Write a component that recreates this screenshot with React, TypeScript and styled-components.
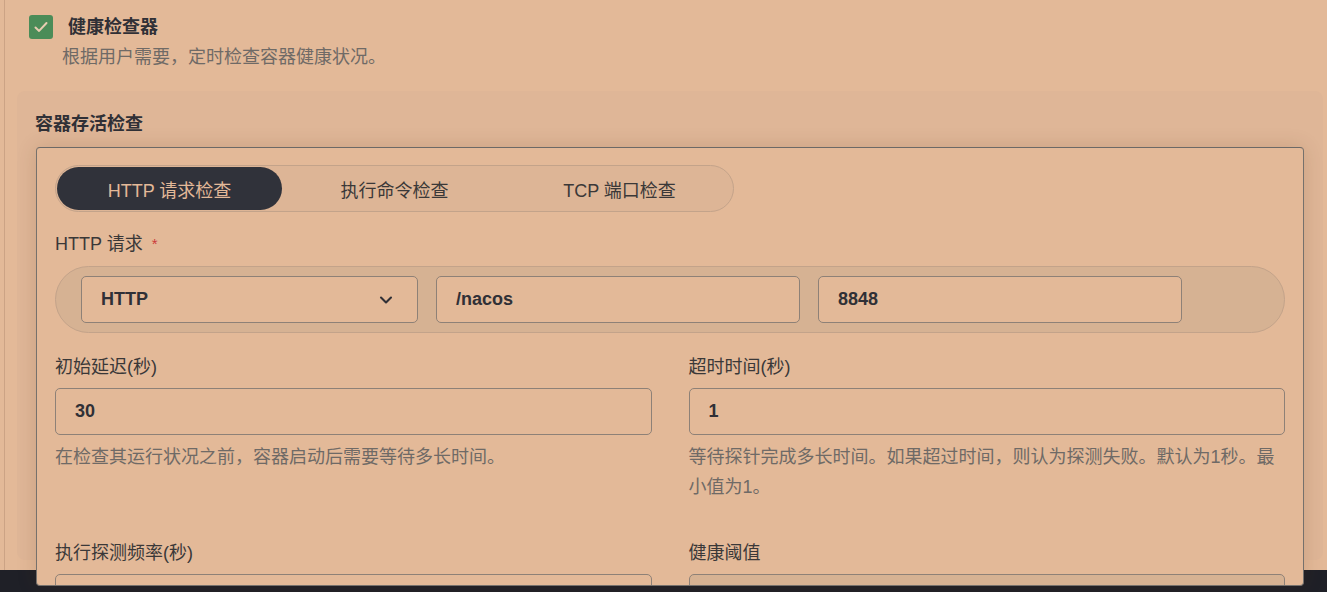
import styled, { createGlobalStyle } from 'styled-components'
import { ChevronDown } from 'lucide-react'

const colors = {
  page: '#e3b998',
  panel: '#dfb697',
  well: '#d6b293',
  segment: '#ddb596',
  dark: '#30323a',
  footer: '#1f2027',
  text: '#303036',
  muted: '#6f6a66',
  inputBorder: '#8e8177',
  softBorder: '#c3a38a',
  green: '#4b8c58',
  required: '#cc3b3b',
}

const GlobalStyle = createGlobalStyle`
  * { box-sizing: border-box; }
  body {
    margin: 0;
    background: ${colors.page};
    font-family: 'Liberation Sans', 'Noto Sans CJK SC', sans-serif;
    font-size: 18px;
    color: ${colors.text};
  }
`

const Page = styled.div`
  height: 592px;
  display: flex;
  flex-direction: column;
  overflow: hidden;
`

const Main = styled.div`
  flex: 0 0 570px;
  margin-left: 4px;
  border-left: 1px solid #cca385;
  display: flex;
  flex-direction: column;
`

const HeaderRow = styled.div`
  display: flex;
  align-items: center;
  gap: 15px;
  margin: 15px 0 0 24px;
  height: 24px;
`

const Checkbox = styled.span`
  width: 24px;
  height: 24px;
  border-radius: 3px;
  background: ${colors.green};
  display: flex;
  align-items: center;
  justify-content: center;
`

const Title = styled.span`
  font-weight: 700;
  line-height: 24px;
`

const Description = styled.p`
  margin: 6px 0 0 57px;
  line-height: 24px;
  color: ${colors.muted};
`

const Section = styled.section`
  margin: 22px 4px 0 12px;
  height: 469px;
  border-radius: 8px;
  background: ${colors.panel};
  padding: 21px 19px 0 19px;
  display: flex;
  flex-direction: column;
  gap: 11px;
`

const SectionTitle = styled.h3`
  margin: 0 0 0 -1px;
  font-size: 18px;
  font-weight: 700;
  line-height: 24px;
`

const Card = styled.div`
  position: relative;
  z-index: 1;
  height: 439px;
  flex-shrink: 0;
  background: ${colors.page};
  border: 1px solid #76716c;
  border-top-color: #6c6966;
  border-radius: 4px;
  box-shadow: 0 0 20px rgba(90, 50, 20, 0.16);
  padding: 17px 18px 0;
  overflow: hidden;
`

const Segmented = styled.div`
  display: inline-flex;
  padding: 1px;
  border: 1px solid ${colors.softBorder};
  border-radius: 24px;
  background: ${colors.segment};
`

const SegmentTab = styled.button<{ $active?: boolean }>`
  width: 225px;
  height: 43px;
  border: none;
  border-radius: 22px;
  font: inherit;
  font-size: 18px;
  cursor: pointer;
  background: ${(p) => (p.$active ? colors.dark : 'transparent')};
  color: ${(p) => (p.$active ? colors.page : '#3a3838')};
`

const Label = styled.div`
  line-height: 24px;
  color: #3a3838;
`

const FieldLabel = styled(Label)`
  margin: 20px 0 10px;
`

const Required = styled.span`
  color: ${colors.required};
  font-size: 15px;
  vertical-align: top;
  margin-left: 9px;
`

const InputGroup = styled.div`
  display: flex;
  gap: 18px;
  height: 67px;
  padding: 9px 25px;
  border: 1px solid ${colors.softBorder};
  border-radius: 34px;
  background: ${colors.well};
`

const Box = styled.div<{ $width?: number; $disabled?: boolean }>`
  ${(p) => (p.$width ? `width: ${p.$width}px; flex-shrink: 0;` : '')}
  height: 47px;
  display: flex;
  align-items: center;
  justify-content: space-between;
  padding: 0 21px 0 19px;
  border: 1px solid ${colors.inputBorder};
  border-radius: 5px;
  background: ${(p) => (p.$disabled ? colors.well : colors.page)};
  font-weight: 700;
  color: ${colors.text};
`

const Grid = styled.div`
  display: grid;
  grid-template-columns: 1fr 1fr;
  column-gap: 37px;
  row-gap: 39px;
  margin-top: 22px;
`

const Field = styled.div`
  display: flex;
  flex-direction: column;
  gap: 9px;
`

const Help = styled.p`
  margin: -2px 0 0;
  line-height: 30px;
  color: ${colors.muted};
`

const Footer = styled.div`
  flex: 0 0 22px;
  background: ${colors.footer};
`

const fields = [
  {
    label: '初始延迟(秒)',
    value: '30',
    help: '在检查其运行状况之前，容器启动后需要等待多长时间。',
  },
  {
    label: '超时时间(秒)',
    value: '1',
    help: '等待探针完成多长时间。如果超过时间，则认为探测失败。默认为1秒。最小值为1。',
  },
  { label: '执行探测频率(秒)', value: '' },
  { label: '健康阈值', value: '', disabled: true },
]

export default function App() {
  return (
    <Page>
      <GlobalStyle />
      <Main>
        <HeaderRow>
          <Checkbox>
            <svg width="20" height="20" viewBox="0 0 20 20" fill="none">
              <path d="M4.5 10.5l3.6 3.4L15.5 6" stroke="#e8cdb2" strokeWidth="2" strokeLinecap="round" strokeLinejoin="round" />
            </svg>
          </Checkbox>
          <Title>健康检查器</Title>
        </HeaderRow>
        <Description>根据用户需要，定时检查容器健康状况。</Description>
        <Section>
          <SectionTitle>容器存活检查</SectionTitle>
          <Card>
            <Segmented>
              <SegmentTab $active>HTTP 请求检查</SegmentTab>
              <SegmentTab>执行命令检查</SegmentTab>
              <SegmentTab>TCP 端口检查</SegmentTab>
            </Segmented>
            <FieldLabel>
              HTTP 请求<Required>*</Required>
            </FieldLabel>
            <InputGroup>
              <Box $width={337}>
                HTTP
                <ChevronDown size={20} strokeWidth={2.5} color={colors.text} />
              </Box>
              <Box $width={364}>/nacos</Box>
              <Box $width={364}>8848</Box>
            </InputGroup>
            <Grid>
              {fields.map((f) => (
                <Field key={f.label}>
                  <Label>{f.label}</Label>
                  <Box $disabled={f.disabled}>{f.value}</Box>
                  {f.help && <Help>{f.help}</Help>}
                </Field>
              ))}
            </Grid>
          </Card>
        </Section>
      </Main>
      <Footer />
    </Page>
  )
}
